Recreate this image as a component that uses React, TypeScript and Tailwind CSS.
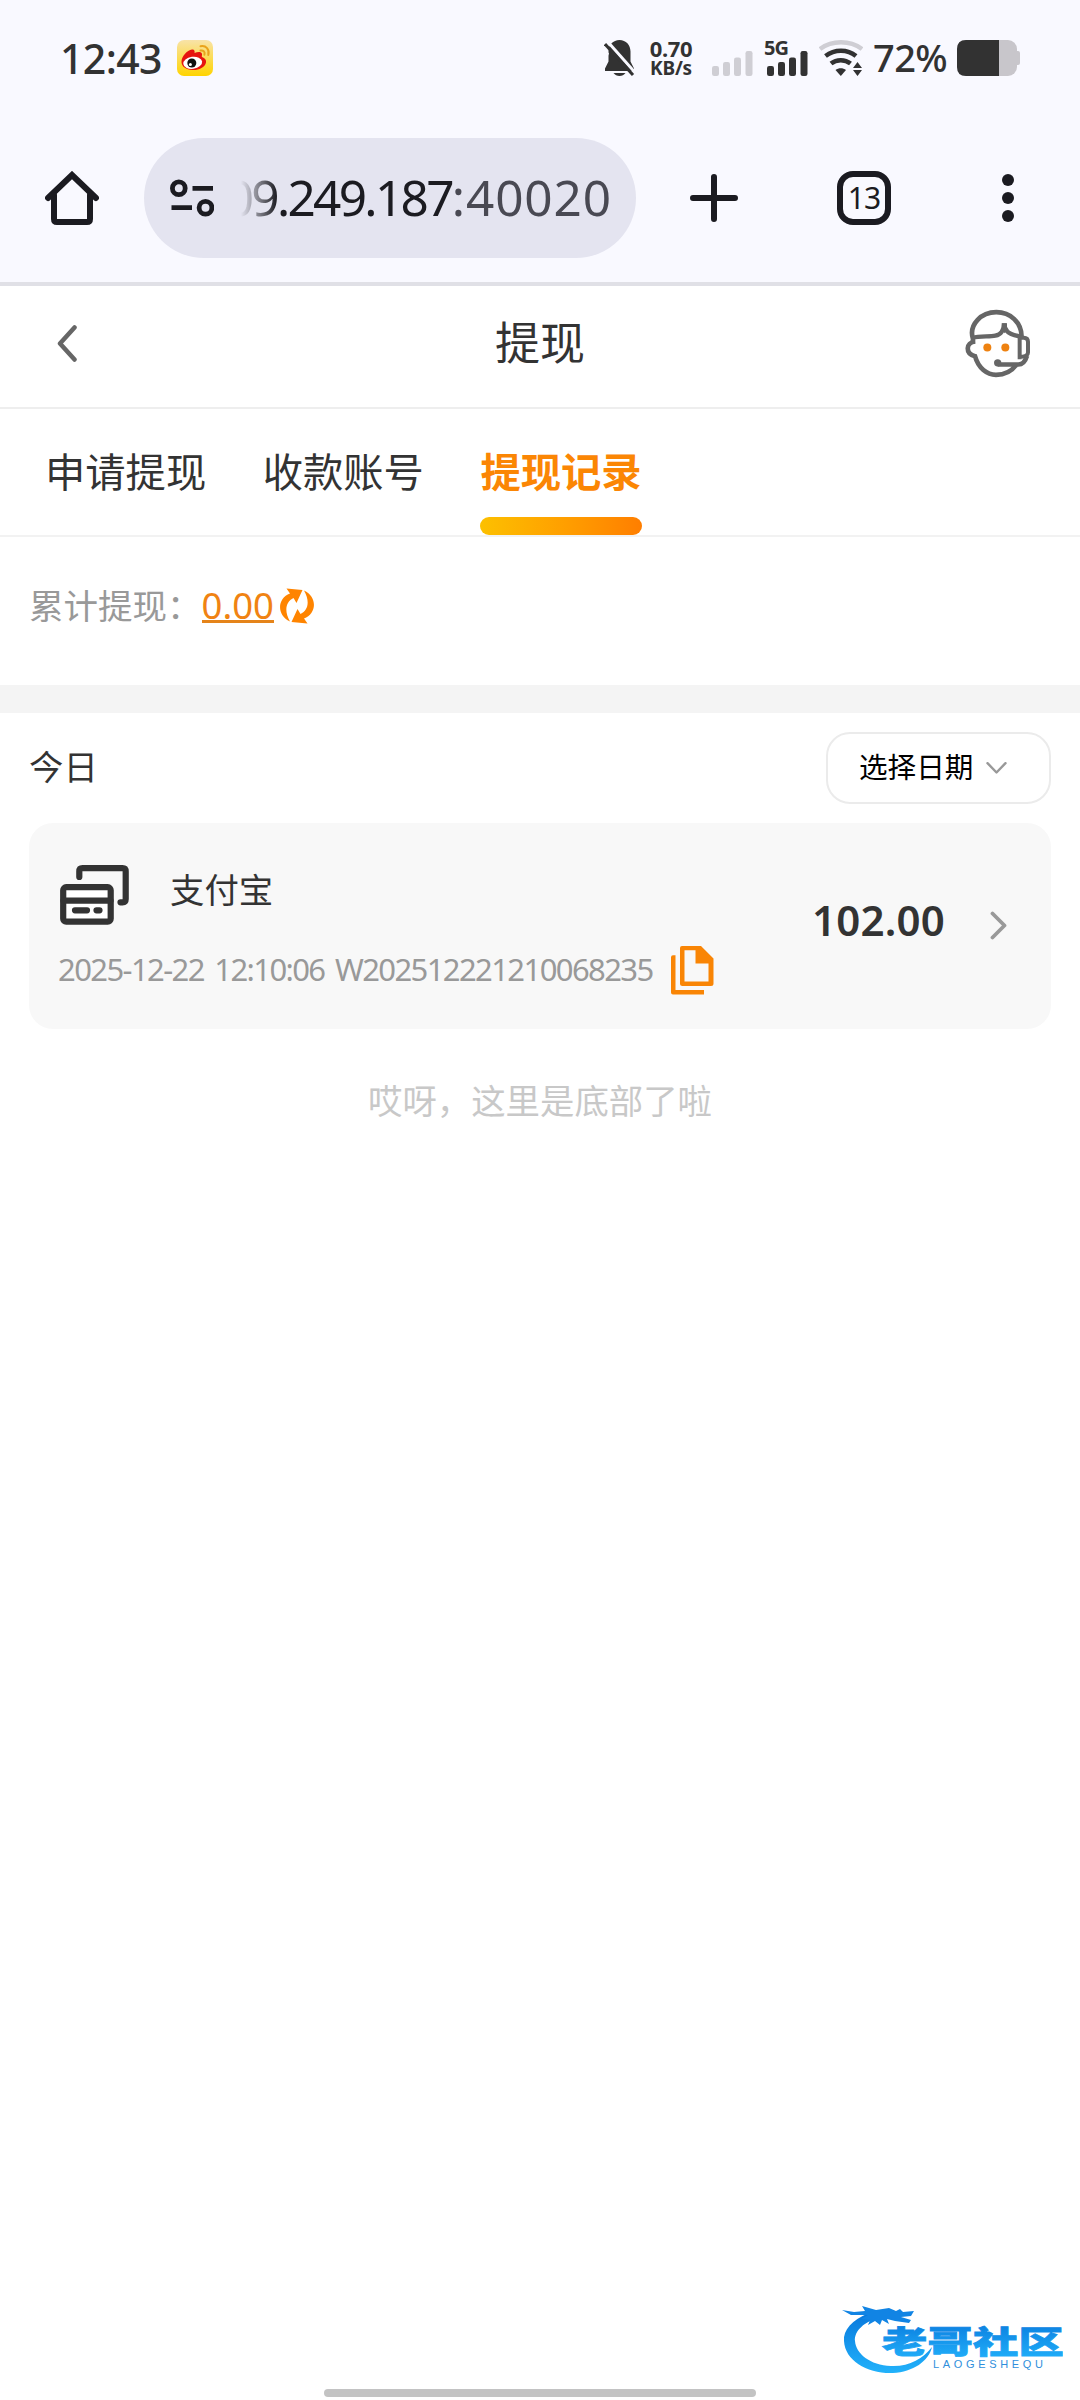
import React from 'react';

const TABS = [
  { id: 'apply', label: '申请提现' },
  { id: 'account', label: '收款账号' },
  { id: 'records', label: '提现记录' },
];

const SIGNAL_BARS = [
  { x: 0, y: 15 },
  { x: 11, y: 11 },
  { x: 22, y: 6.5 },
  { x: 33.5, y: 0 },
];

function SignalBars({ className }: { className: string }) {
  return (
    <svg viewBox="0 0 41 25" className={`w-[41px] h-[25px] ${className}`} fill="currentColor" aria-hidden="true">
      {SIGNAL_BARS.map((bar) => (
        <rect key={bar.x} x={bar.x} y={bar.y} width="7" height={25 - bar.y} rx="2.2" />
      ))}
    </svg>
  );
}

function WeiboIcon() {
  return (
    <svg viewBox="0 0 36 36" className="w-9 h-9 ml-[17px]" aria-hidden="true">
      <defs>
        <linearGradient id="weibo-bg" x1="0" y1="0" x2="0" y2="1">
          <stop offset="0" stopColor="#f8e3a8" />
          <stop offset="1" stopColor="#ffd400" />
        </linearGradient>
      </defs>
      <rect width="36" height="36" rx="7" fill="url(#weibo-bg)" />
      <path d="M4.5 22C4.5 16 10 10.500 15 9.500C17.500 9.200 18 11.500 17.500 13C21 11.500 24.500 11.500 25 14C25.200 15.200 24.500 16.500 25 17C28 18 29.500 20 29 22.500C28 27.500 21.500 30.300 15.500 30C9 29.700 4.500 26.500 4.500 22Z" fill="#e6140f" />
      <ellipse cx="15.700" cy="22.800" rx="9.500" ry="6" fill="#fff" transform="rotate(-8 15.700 22.800)" />
      <circle cx="14.800" cy="23" r="4.500" fill="#111" />
      <circle cx="13.400" cy="24.500" r="1.500" fill="#fff" />
      <path d="M23.500 6.200C29 5 32.800 9.500 31.300 15M23.500 10.500C26.500 10 28.300 12 27.400 14.700" fill="none" stroke="#e9a21c" strokeWidth="2" strokeLinecap="round" />
    </svg>
  );
}

function MutedBellIcon() {
  return (
    <svg viewBox="0 0 31 36" className="w-[31px] h-9" aria-hidden="true">
      <path d="M15.500 0C22 0 26.500 5 26.500 11.500V21.500L30 28.500V31H1V28.500L4.500 21.500V11.500C4.500 5 9 0 15.500 0Z" fill="#323232" />
      <path d="M9.500 33H21.500C20 35 18 36 15.500 36C13 36 11 35 9.500 33Z" fill="#323232" />
      <path d="M3.500 1.500L31.500 33" stroke="#f9f9ff" strokeWidth="3" />
      <path d="M1 4L29 35" stroke="#323232" strokeWidth="3" />
      <path d="M-1 7L5 13.500L3 18L-1 16Z" fill="#f9f9ff" />
    </svg>
  );
}

function WifiIcon() {
  return (
    <svg viewBox="0 0 44 36" className="w-11 h-9" fill="none" strokeWidth="4.500" aria-hidden="true">
      <path d="M1 9C13 0 31 0 43 9" stroke="#cfced4" />
      <path d="M6.500 16C15.500 9 28.500 9 37 16" stroke="#323232" />
      <path d="M12 23.500C17.500 19 26 19 31.500 23.500" stroke="#323232" />
      <path d="M16.500 30C19.500 27.600 24 27.600 27 30L21.800 36Z" fill="#323232" />
      <path d="M38.500 22L43 28H34Z M38.500 36L43 30H34Z" fill="#323232" />
    </svg>
  );
}

function StatusBar() {
  return (
    <div className="h-[116px] flex items-start justify-between pl-[60px] pr-[60px] pt-10 text-[#323232] font-['Noto_Sans',sans-serif]">
      <div className="flex items-center h-9">
        <span className="w-[100px] text-[41px] leading-9 font-medium tracking-[-0.600px] whitespace-nowrap">12:43</span>
        <WeiboIcon />
      </div>
      <div className="flex items-start h-9">
        <MutedBellIcon />
        <div className="ml-[13px] w-[46px] flex flex-col items-center font-bold whitespace-nowrap">
          <span className="text-[22px] leading-[18px] -mt-px tracking-[-0.300px]">0.70</span>
          <span className="text-[19px] leading-[20px] mt-px tracking-[-0.200px]">KB/s</span>
        </div>
        <SignalBars className="mt-[11px] ml-[18px] text-[#cfced4]" />
        <div className="relative ml-[14px] pt-[11px]">
          <span className="absolute -left-[3px] -top-px text-[20px] leading-[17px] font-bold tracking-[-1px]">5G</span>
          <SignalBars className="text-[#323232]" />
        </div>
        <div className="ml-[11px]">
          <WifiIcon />
        </div>
        <span className="ml-[10px] w-[74px] text-[38px] leading-9 -mt-px font-medium tracking-[-0.600px] whitespace-nowrap">72%</span>
        <svg viewBox="0 0 63 36" className="ml-[10px] w-[63px] h-9" aria-hidden="true">
          <rect width="60" height="36" rx="9" fill="#c8c6cb" />
          <rect x="57" y="11" width="6" height="14" rx="2" fill="#c8c6cb" />
          <path d="M9 0H42V36H9Q0 36 0 27V9Q0 0 9 0Z" fill="#323232" />
        </svg>
      </div>
    </div>
  );
}

function BrowserBar() {
  return (
    <div className="h-[166px] pt-[22px] pl-[45px] pr-[66px] flex items-start text-[#1b1b21]">
      <div className="flex items-center h-[120px] w-full">
        <svg viewBox="0 0 54 54" className="w-[54px] h-[54px] shrink-0" fill="none" stroke="currentColor" strokeWidth="6" strokeLinejoin="miter" strokeLinecap="round" aria-hidden="true">
          <path d="M3 27L27 4L51 27" />
          <path d="M9 24V48Q9 51 12 51H42Q45 51 45 48V24" />
        </svg>
        <div className="ml-[45px] w-[492px] h-[120px] shrink-0 rounded-full bg-[#e4e4f0] flex items-center pl-[26px] pr-[24px]">
          <svg viewBox="0 0 44 38" className="w-11 h-[38px] shrink-0" fill="none" stroke="currentColor" strokeWidth="4.800" aria-hidden="true">
            <circle cx="8.800" cy="9.300" r="6.400" />
            <path d="M22.500 9.300H43M1.500 28.700H22" />
            <circle cx="35.500" cy="28.700" r="6.400" />
          </svg>
          <div className="ml-[27px] flex-1 min-w-0 overflow-hidden flex justify-end [mask-image:linear-gradient(to_right,transparent,black_36px)]">
            <span className="-mt-[2px] text-[49.500px] leading-[60px] tracking-[-2.700px] whitespace-nowrap font-['Noto_Sans',sans-serif]">
              09.249.187<span className="text-[#494953] tracking-[0.900px]">:40020</span>
            </span>
          </div>
        </div>
        <svg viewBox="0 0 48 48" className="ml-[54px] w-12 h-12 shrink-0" stroke="currentColor" strokeWidth="6" strokeLinecap="round" aria-hidden="true">
          <path d="M24 3V45M3 24H45" />
        </svg>
        <div className="ml-[99px] w-[54px] h-[54px] shrink-0 rounded-[16px] border-[6px] border-[#1b1b21] flex items-center justify-center">
          <span className="text-[30px] leading-none tracking-[-1px] font-['Noto_Sans',sans-serif]">13</span>
        </div>
        <svg viewBox="0 0 12 48" className="ml-auto w-3 h-12 shrink-0" fill="currentColor" aria-hidden="true">
          <circle cx="6" cy="6" r="6" />
          <circle cx="6" cy="24" r="6" />
          <circle cx="6" cy="42" r="6" />
        </svg>
      </div>
    </div>
  );
}

function SupportIcon() {
  return (
    <svg viewBox="0 0 198 206" className="w-[66px] h-[69px]" fill="none" stroke="#666" strokeWidth="14" aria-hidden="true">
      <path d="M24 104V90C10 45 50 9 94 9C136 9 170 40 170 84" />
      <path d="M22 86C55 76 96 90 110 68C116 59 118 52 118 42C118 52 121 60 127 67C136 77 150 79 168 82" strokeWidth="13" />
      <path d="M110 42H126V62L118 72L110 62Z" fill="#666" stroke="none" />
      <path d="M30 97C2 100 0 133 30 141C40 177 66 197 93 197C118 197 140 186 153 168" />
      <path d="M164 150V86H176Q189 86 189 98V130Q189 143 164 143" strokeWidth="12" />
      <path d="M98 166H160Q178 166 186 140" />
      <circle cx="98" cy="161" r="11" fill="#666" stroke="none" />
      <circle cx="67" cy="115" r="12" fill="#ee8211" stroke="none" />
      <circle cx="121" cy="115" r="12" fill="#ee8211" stroke="none" />
    </svg>
  );
}

function PageHeader() {
  return (
    <header className="h-[123px] border-b-2 border-[#eeeeee] pl-[57px] pr-[49px] pb-[6px] flex items-center justify-between">
      <svg viewBox="0 0 20 37" className="w-5 h-[37px] mr-[38px]" fill="none" stroke="#666" strokeWidth="4.500" strokeLinecap="round" strokeLinejoin="round" aria-hidden="true">
        <path d="M17.500 2.500L3 18.500L17.500 34.500" />
      </svg>
      <h1 className="-mt-[5px] text-[45px] leading-[60px] text-[#333]">提现</h1>
      <SupportIcon />
    </header>
  );
}

function WithdrawTabs() {
  return (
    <nav className="h-[128px] border-b-2 border-[#f2f2f2] pl-[45px] flex gap-[56.500px]">
      {TABS.map((tab) => {
        const active = tab.id === 'records';
        return (
          <button key={tab.id} type="button" className="h-[126px] flex flex-col justify-between">
            <span
              className={`pt-[31px] text-[40.300px] leading-[60px] ${
                active ? 'font-bold text-[#fb8604]' : 'text-[#333]'
              }`}
            >
              {tab.label}
            </span>
            {active && <span className="w-full h-[18px] rounded-full bg-linear-to-r from-[#fcc000] to-[#ff7e00]"></span>}
          </button>
        );
      })}
    </nav>
  );
}

function TotalRow() {
  return (
    <div className="h-[148px] pl-[29px] pt-[37px] flex items-start text-[34.500px] leading-[60px]">
      <span className="text-[#999]">累计提现：</span>
      <span className="mt-[18px] h-[31px] border-b-3 border-[#e5841a] flex items-center text-[36.500px] text-[#f08312] font-['Noto_Sans',sans-serif]">
        <span className="-mt-[3px]">0.00</span>
      </span>
      <svg viewBox="0 0 36 36" className="ml-[5px] mt-[14px] w-9 h-9" fill="#ff8400" aria-hidden="true">
        <path d="M11 33.500C-3 27 -1.500 10 11 5.500L7.500 0.500L23.500 2L17.500 15L14.500 10C6.500 14 5 23 11 33.500Z" />
        <path d="M25 2.500C39 9 37.500 26 25 30.500L28.500 35.500L12.500 34L18.500 21L21.500 26C29.500 22 31 13 25 2.500Z" />
      </svg>
    </div>
  );
}

function RecordCard() {
  return (
    <article className="mx-[29px] h-[206px] rounded-[24px] bg-[#f8f8f8] flex justify-between">
      <div className="pl-[29px] pt-[42px]">
        <div className="flex items-start h-[60px]">
          <svg viewBox="0 0 69 60" className="ml-[2px] w-[69px] h-[60px]" fill="none" stroke="#333" strokeWidth="6.200" strokeLinecap="round" strokeLinejoin="round" aria-hidden="true">
            <rect x="3.200" y="22.200" width="47.500" height="34.500" rx="3" fill="#fff" />
            <path d="M3.500 35.700H50.500" />
            <path d="M15 45.300H27M36.500 45.300H39.500" />
            <path d="M19.300 12V6.500Q19.300 3.200 22.500 3.200H62.500Q65.700 3.200 65.700 6.500V34Q65.700 37.300 62.500 37.300H60.500" />
          </svg>
          <span className="ml-[41px] -mt-[7px] text-[34.400px] leading-[60px] text-[#333]">支付宝</span>
        </div>
        <div className="flex items-center mt-[20px]">
          <span className="w-[600px] -mt-[2px] text-[31px] leading-[50px] tracking-[-1.600px] [word-spacing:4px] whitespace-nowrap text-[#999] font-['Noto_Sans',sans-serif]">
            2025-12-22 12:10:06 W202512221210068235
          </span>
          <svg viewBox="0 0 43 49" className="ml-[13px] mt-px w-[43px] h-[49px]" fill="#f98505" aria-hidden="true">
            <path fillRule="evenodd" d="M11 0H30L42.500 12.500V37.500Q42.500 40 40 40H11.500Q9 40 9 37.500V2Q9 0 11 0ZM13.500 4.300V35.500H37.500V17.500H24.500V4.300Z" />
            <path d="M2 9.300H4.500V44H33V48.500H2Q0 48.500 0 46.500V11.300Q0 9.300 2 9.300Z" />
          </svg>
        </div>
      </div>
      <div className="pr-[44px] pt-[67px] flex items-start">
        <span className="text-[42px] leading-[60px] font-semibold tracking-[0.200px] text-[#333] font-['Noto_Sans',sans-serif]">102.00</span>
        <svg viewBox="0 0 17 29" className="ml-[45px] mt-[21px] w-[17px] h-[29px]" fill="none" stroke="#999" strokeWidth="3.800" strokeLinecap="round" strokeLinejoin="round" aria-hidden="true">
          <path d="M2.500 2.500L14.500 14.500L2.500 26.500" />
        </svg>
      </div>
    </article>
  );
}

function CommunityLogo() {
  return (
    <svg viewBox="0 0 222 72" className="absolute left-[841px] top-[2303px] w-[222px] h-[72px]" aria-hidden="true">
      <defs>
        <linearGradient id="logo-blue" x1="0" y1="0" x2="0" y2="1">
          <stop offset="0" stopColor="#0878dc" />
          <stop offset="1" stopColor="#22b2fb" />
        </linearGradient>
      </defs>
      <path d="M28 10C11 17 2 27 3 38C4 58 27 71 52 70C72 69 88 58 91 44C82 56 67 64 50 63C29 62 15 51 14 38C13 28 24 18 38 15Z" fill="url(#logo-blue)" />
      <path d="M1 7L13 9L24 8L21 3L35 7L48 5L55 8L59 6L62 9L73 8L70 13L60 14L70 17L68 20L54 18L46 16L48 21L41 17L39 22L34 18L27 22L29 17L20 16L27 12L10 12Z" fill="#1184e4" />
      <text transform="translate(41 50) scale(1.460 1)" fontSize="31" fontWeight="900" fill="url(#logo-blue)" stroke="url(#logo-blue)" strokeWidth="0.800" textLength="124.500">老哥社区</text>
      <text x="92" y="65" fontSize="11" textLength="110" fill="#2f8fdc" fontFamily="Liberation Sans, sans-serif">LAOGESHEQU</text>
    </svg>
  );
}

export default function App() {
  return (
    <div className="relative w-[1080px] h-[2400px] overflow-hidden bg-white flex flex-col font-['Noto_Sans_CJK_SC',sans-serif]">
      <div className="bg-[#f9f9ff] border-b-4 border-[#e0e0e6]">
        <StatusBar />
        <BrowserBar />
      </div>
      <PageHeader />
      <WithdrawTabs />
      <TotalRow />
      <div className="h-[28px] bg-[#f4f4f4]"></div>
      <div className="h-[110px] pl-[29px] pr-[29px] pt-[19px] flex items-start justify-between">
        <h2 className="pt-[3px] text-[34.400px] leading-[60px] text-[#333]">今日</h2>
        <button type="button" className="w-[225px] h-[72px] rounded-[24px] border-2 border-[#ebebeb] flex items-center pl-[31px]">
          <span className="-mt-[5px] text-[28.600px] leading-[40px] text-black">选择日期</span>
          <svg viewBox="0 0 21 12" className="ml-[13px] w-[21px] h-3" fill="none" stroke="#999" strokeWidth="2.400" strokeLinecap="round" strokeLinejoin="round" aria-hidden="true">
            <path d="M1.500 1.200L10.500 10.500L19.500 1.200" />
          </svg>
        </button>
      </div>
      <RecordCard />
      <p className="mt-[40px] text-center text-[34.400px] leading-[60px] text-[#c8c8c8]">哎呀，这里是底部了啦</p>
      <CommunityLogo />
      <div className="mt-auto mb-[3px] mx-auto w-[432px] h-2 rounded-full bg-[#c3c3c3]"></div>
    </div>
  );
}
